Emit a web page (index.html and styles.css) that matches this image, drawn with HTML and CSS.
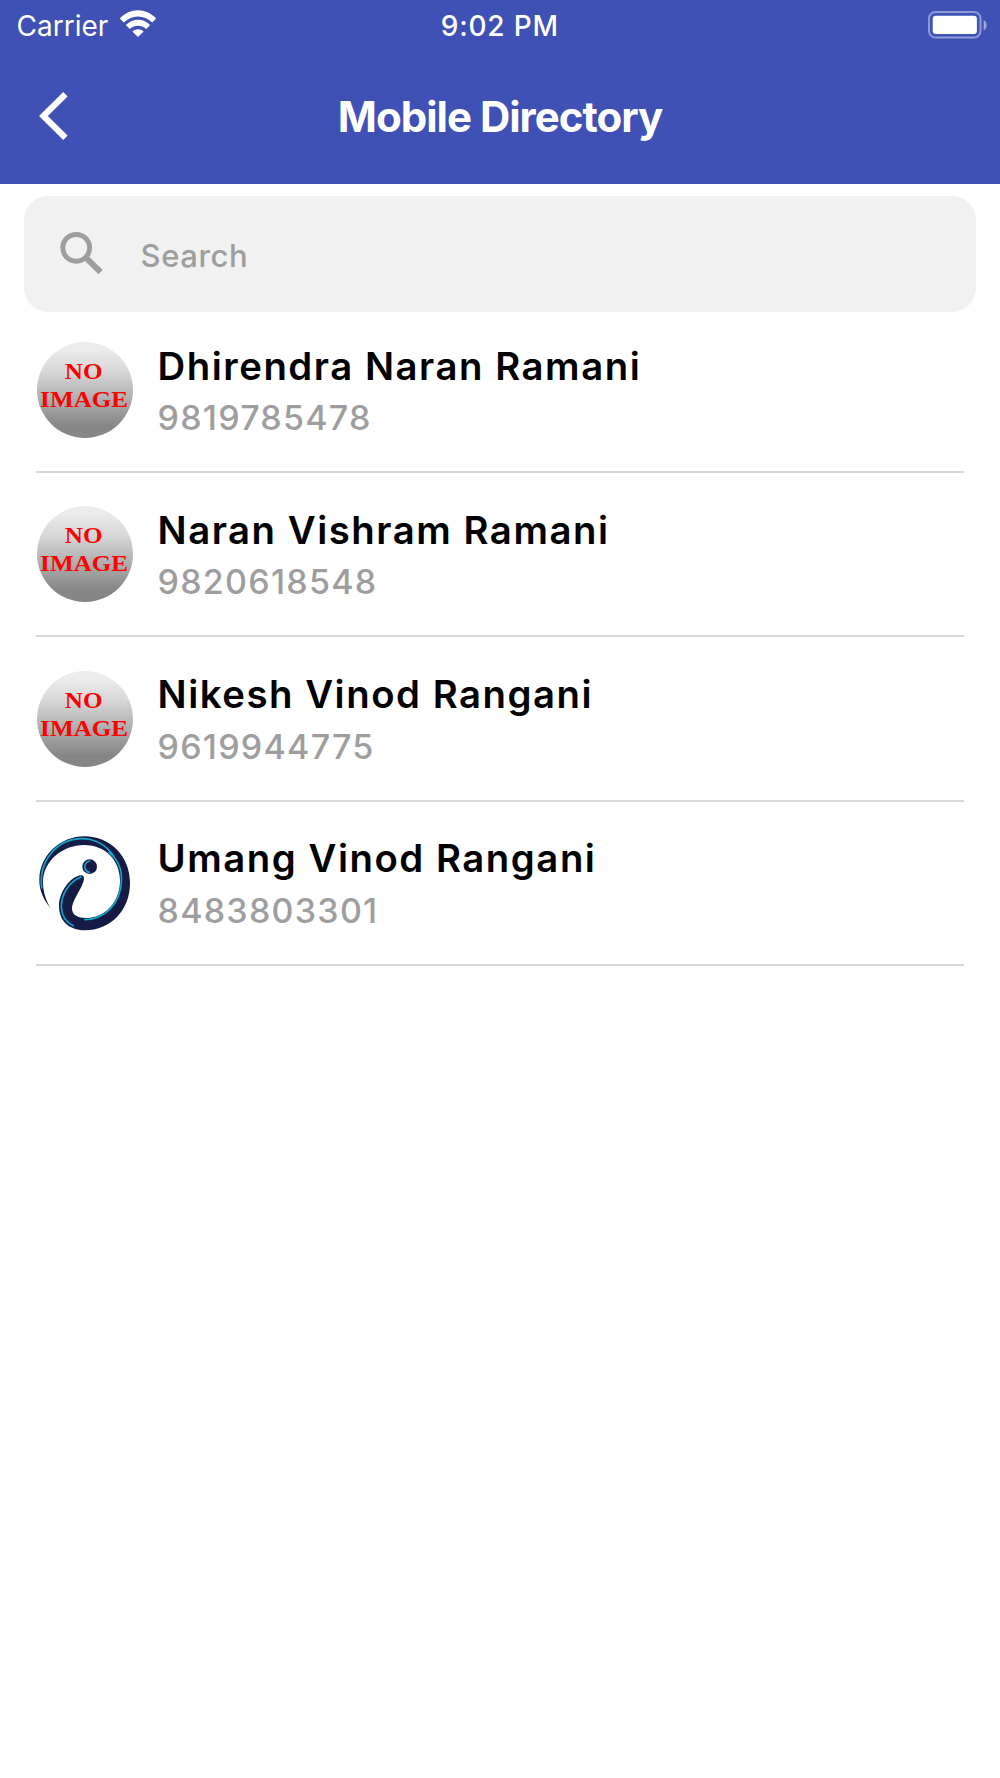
FILE: index.html
```
<!DOCTYPE html>
<html lang="en">
<head>
    <meta charset="UTF-8">
    <meta name="viewport" content="width=device-width, initial-scale=1.0">
    <title>Mobile Directory</title>
    <link rel="stylesheet" href="styles.css">
</head>
<body>
    <header class="header">
        <div class="status-bar">
            <div class="carrier">
                <span>Carrier</span>
                <svg class="wifi" width="38" height="28" viewBox="0 0 38 28">
                    <path d="M.8 8.6C11-2.4 27-2.4 37.2 8.6L33.2 12.6C25.2 4.6 12.8 4.6 4.8 12.6Z"/>
                    <path d="M6.8 15C14 8 24 8 31.2 15L27.2 19C22.5 14.6 15.5 14.6 10.8 19Z"/>
                    <path d="M13.4 21.4C16.6 18.4 21.4 18.4 24.6 21.4L19 27Z"/>
                </svg>
            </div>
            <span class="time">9:02 PM</span>
            <svg class="battery" width="60" height="28" viewBox="0 0 60 28">
                <rect x="1" y="1" width="51.5" height="25.5" rx="6.5" fill="none" stroke="#fff" stroke-opacity=".42" stroke-width="2"/>
                <rect x="4.7" y="4.8" width="44.2" height="18.2" rx="3.2" fill="#fff"/>
                <path d="M55.7 9C59.6 10.8 59.6 17.5 55.7 19.3Z" fill="#fff" fill-opacity=".5"/>
            </svg>
        </div>
        <div class="nav-bar">
            <svg class="back" width="30" height="48" viewBox="0 0 30 48">
                <path d="M26.4 2.2L4.4 24L26.4 45.8" fill="none" stroke="#fff" stroke-width="6.2"/>
            </svg>
            <h1 class="title">Mobile Directory</h1>
        </div>
    </header>

    <main>
        <div class="search">
            <svg class="search-icon" width="44" height="44" viewBox="0 0 44 44">
                <circle cx="17.2" cy="16.8" r="13.4"/>
                <path d="M27.6 27.4L41.6 41.2" stroke-width="6"/>
            </svg>
            <input class="search-input" type="text" placeholder="Search">
        </div>

        <ul class="contacts">
            <li class="contact">
                <div class="avatar no-image"><span>NO</span><span>IMAGE</span></div>
                <div class="info">
                    <div class="name">Dhirendra Naran Ramani</div>
                    <div class="phone">9819785478</div>
                </div>
            </li>
            <li class="contact">
                <div class="avatar no-image"><span>NO</span><span>IMAGE</span></div>
                <div class="info">
                    <div class="name">Naran Vishram Ramani</div>
                    <div class="phone">9820618548</div>
                </div>
            </li>
            <li class="contact">
                <div class="avatar no-image"><span>NO</span><span>IMAGE</span></div>
                <div class="info">
                    <div class="name">Nikesh Vinod Rangani</div>
                    <div class="phone">9619944775</div>
                </div>
            </li>
            <li class="contact">
                <svg class="avatar" viewBox="51 44 288 288">
                    <path class="logo-ink" d="M93 265C70 238 57 209 58 176C60 105 120 48 194 48C270 48 330 107 330 188C330 270 272 330 194 330C147 329 117 302 117 257C117 217 150 168 184 165C192 165 194 173 190 184C182 211 154 243 156 267C158 285 174 293 197 293C256 293 300 244 300 181C300 119 255 74 193 74C126 74 70 123 69 184C69 214 78 243 93 265Z"/>
                    <path class="logo-line" d="M65 202C55 122 111 58 180 55C225 53 260 76 281 107"/>
                    <path class="logo-line" d="M267 96C296 119 307 151 304 187C300 250 255 297 194 298"/>
                    <path class="logo-line" d="M183 170C147 184 124 222 124 259C125 286 139 306 160 316"/>
                    <circle class="logo-ink" cx="209" cy="139" r="22"/>
                    <path class="logo-line" d="M209 122C190 126 190 151 208 156"/>
                </svg>
                <div class="info">
                    <div class="name">Umang Vinod Rangani</div>
                    <div class="phone">8483803301</div>
                </div>
            </li>
        </ul>
    </main>
</body>
</html>
```
FILE: styles.css
```
* {
    box-sizing: border-box;
}

body {
    margin: 0;
    min-height: 100vh;
    background-color: #fff;
    font-family: Inter, "Liberation Sans", sans-serif;
}

.header {
    height: 183.5px;
    background-color: #3f51b5;
    color: #fff;
}

.status-bar {
    display: grid;
    grid-template-columns: 1fr auto 1fr;
    align-items: center;
    height: 51px;
    padding: 0 12px 0 16.5px;
    font-size: 28px;
    line-height: 49px;
}

.carrier span,
.time {
    padding-top: 2px;
}

.carrier {
    display: flex;
    align-items: center;
    gap: 11px;
}

.wifi {
    fill: #fff;
    margin-bottom: 3px;
}

.time {
    margin-right: 5px;
    font-weight: 500;
    letter-spacing: 0.8px;
}

.battery {
    justify-self: end;
    margin-bottom: 2px;
}

.nav-bar {
    display: grid;
    grid-template-columns: 1fr auto 1fr;
    align-items: center;
    height: 132px;
    padding: 0 38.5px;
}

.back {
    display: block;
    margin-bottom: 2px;
}

.title {
    margin: 0;
    font-size: 42px;
    font-weight: 700;
    line-height: 50px;
    letter-spacing: -1px;
}

.search {
    display: flex;
    align-items: center;
    height: 115.5px;
    margin: 12.5px 24px 0;
    padding: 0 35px;
    border-radius: 24px;
    background-color: #f1f1f1;
}

.search-icon {
    fill: none;
    stroke: #9e9e9e;
    stroke-width: 5;
    margin-bottom: 1px;
}

.search-input {
    flex: 1;
    margin-left: 37.5px;
    padding: 4px 0 0;
    border: none;
    outline: none;
    background: none;
    font: 500 31px Inter, "Liberation Sans", sans-serif;
    letter-spacing: 0.6px;
}

.search-input::placeholder {
    color: #9e9e9e;
}

.contacts {
    margin: 0 36px;
    padding: 0;
    list-style: none;
}

.contact {
    display: flex;
    height: 164.25px;
    padding-top: 33.3px;
    border-bottom: 2px solid #d8d8d8;
}

.contact:first-child {
    height: 161.7px;
    padding-top: 30.8px;
}

.avatar {
    flex: none;
    width: 96px;
    height: 96px;
    margin-left: 0.5px;
    border-radius: 50%;
}

.no-image {
    display: flex;
    flex-direction: column;
    align-items: center;
    padding: 15px 1px 0 0;
    background: linear-gradient(#ececec 8%, #d8d8d8 30%, #868686 88%);
    color: #f00;
    font: 700 23.5px/28px "Liberation Serif", serif;
}

.no-image span {
    transform: scaleX(1.07);
}

.info {
    margin: 0.5px 0 0 25px;
}

.name {
    color: #000;
    font-size: 38.3px;
    font-weight: 640;
    line-height: 46px;
    letter-spacing: 1.55px;
}

.phone {
    margin-top: 6.5px;
    color: #9e9e9e;
    font-size: 34px;
    font-weight: 450;
    line-height: 46px;
    letter-spacing: 1.25px;
}

.logo-ink {
    fill: #141b45;
}

.logo-line {
    fill: none;
    stroke: #12a5c9;
    stroke-width: 5;
    stroke-linecap: round;
}
```
